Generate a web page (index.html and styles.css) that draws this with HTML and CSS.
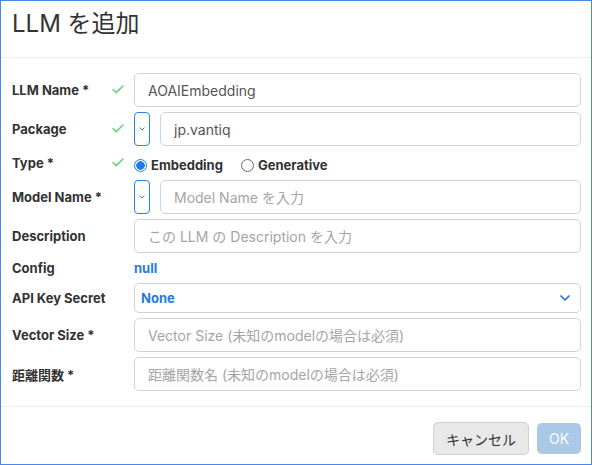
FILE: index.html
```html
<!DOCTYPE html>
<html lang="ja">
<head>
<meta charset="utf-8">
<title>LLM を追加</title>
<link rel="stylesheet" href="styles.css">
</head>
<body>
<div class="dialog">
  <header class="dlg-head">
    <h1 class="dlg-title">LLM を追加</h1>
  </header>
  <form class="dlg-body">
    <label class="lbl r-input">LLM Name *</label>
    <span class="chk r-input"><svg width="12" height="9" viewBox="0 0 12 9"><path d="M1 4.5 L4.3 7.6 L11 1" fill="none" stroke="#6bcf78" stroke-width="1.5" stroke-linecap="round" stroke-linejoin="round"/></svg></span>
    <div class="field r-input"><input class="inp" type="text" value="AOAIEmbedding"></div>

    <label class="lbl r-input">Package</label>
    <span class="chk r-input"><svg width="12" height="9" viewBox="0 0 12 9"><path d="M1 4.5 L4.3 7.6 L11 1" fill="none" stroke="#6bcf78" stroke-width="1.5" stroke-linecap="round" stroke-linejoin="round"/></svg></span>
    <div class="field r-input combo">
      <button type="button" class="ddbtn"><svg width="6" height="4" viewBox="0 0 6 4"><path d="M0.8 0.8 L3 3 L5.2 0.8" fill="none" stroke="#2d7fe3" stroke-width="1" stroke-linecap="round"/></svg></button>
      <input class="inp" type="text" value="jp.vantiq">
    </div>

    <label class="lbl r-type">Type *</label>
    <span class="chk r-type"><svg width="12" height="9" viewBox="0 0 12 9"><path d="M1 4.5 L4.3 7.6 L11 1" fill="none" stroke="#6bcf78" stroke-width="1.5" stroke-linecap="round" stroke-linejoin="round"/></svg></span>
    <div class="field r-type radios">
      <span class="radio"><span class="rdot on"></span>Embedding</span>
      <span class="radio"><span class="rdot"></span>Generative</span>
    </div>

    <label class="lbl r-input">Model Name *</label>
    <span class="chk r-input"></span>
    <div class="field r-input combo">
      <button type="button" class="ddbtn"><svg width="6" height="4" viewBox="0 0 6 4"><path d="M0.8 0.8 L3 3 L5.2 0.8" fill="none" stroke="#2d7fe3" stroke-width="1" stroke-linecap="round"/></svg></button>
      <input class="inp" type="text" placeholder="Model Name を入力">
    </div>

    <label class="lbl r-input">Description</label>
    <span class="chk r-input"></span>
    <div class="field r-input"><input class="inp" type="text" placeholder="この LLM の Description を入力"></div>

    <label class="lbl r-config">Config</label>
    <span class="chk r-config"></span>
    <div class="field r-config"><span class="nullval">null</span></div>

    <label class="lbl r-select">API Key Secret</label>
    <span class="chk r-select"></span>
    <div class="field r-select">
      <div class="sel"><span>None</span><svg width="10" height="6" viewBox="0 0 10 6"><path d="M1 1 L5 5 L9 1" fill="none" stroke="#2f6fd6" stroke-width="1.7" stroke-linecap="round" stroke-linejoin="round"/></svg></div>
    </div>

    <label class="lbl r-input">Vector Size *</label>
    <span class="chk r-input"></span>
    <div class="field r-input"><input class="inp" type="text" placeholder="Vector Size (未知のmodelの場合は必須)"></div>

    <label class="lbl r-input">距離関数 *</label>
    <span class="chk r-input"></span>
    <div class="field r-input"><input class="inp" type="text" placeholder="距離関数名 (未知のmodelの場合は必須)"></div>
  </form>
  <footer class="dlg-foot">
    <button type="button" class="btn btn-cancel">キャンセル</button>
    <button type="button" class="btn btn-ok">OK</button>
  </footer>
</div>
</body>
</html>
```

FILE: styles.css
```css
* { box-sizing: border-box; }
html, body {
  margin: 0;
  padding: 0;
  background: #ffffff;
}
body {
  font-family: Inter, "Noto Sans CJK JP", sans-serif;
  color: #333333;
}
.dialog {
  width: 592px;
  height: 465px;
  border: 1px solid #4a87ec;
  display: flex;
  flex-direction: column;
  background: #fff;
}
.dlg-head {
  height: 57px;
  border-bottom: 1px solid #ececec;
  padding: 9px 11px 0;
}
.dlg-title {
  margin: 0;
  font-size: 24px;
  line-height: 28px;
  font-weight: 400;
  color: #333;
}
.dlg-body {
  margin: 0;
  padding: 15px 10px 15px 11px;
  display: grid;
  grid-template-columns: 100px 22px 1fr;
  grid-template-rows: 34px 34px 24px 34px 34px 20px 30px 34px 34px;
  row-gap: 5px;
}
.lbl {
  display: flex;
  align-items: center;
  font-size: 13px;
  font-weight: 700;
  color: #333;
  white-space: nowrap;
}
.chk {
  display: flex;
  align-items: center;
  padding-bottom: 2px;
}
.field {
  display: flex;
  align-items: center;
  min-width: 0;
}
.combo { gap: 10px; }
.inp {
  flex: 1;
  width: 100%;
  min-width: 0;
  height: 34px;
  border: 1px solid #d3d3d6;
  border-radius: 5px;
  padding: 0 13px;
  font-family: Inter, "Noto Sans CJK JP", sans-serif;
  font-size: 14px;
  color: #555;
  background: #fff;
  outline: none;
}
.inp::placeholder { color: #a5a5a5; }
.ddbtn {
  flex: none;
  width: 16px;
  height: 34px;
  padding: 0;
  border: 1px solid #2d7fe3;
  border-radius: 4px;
  background: #fff;
  display: flex;
  align-items: center;
  justify-content: center;
}
.radios { gap: 18px; padding-top: 4px; }
.radio {
  display: inline-flex;
  align-items: center;
  gap: 4px;
  font-size: 13px;
  font-weight: 700;
  color: #333;
}
.rdot {
  width: 13px;
  height: 13px;
  border-radius: 50%;
  border: 1px solid #6a6a6a;
  background: #fff;
}
.rdot.on {
  border-color: #1f7ae8;
  background: radial-gradient(circle, #1f7ae8 0 4px, #fff 4.5px);
}
.nullval {
  font-size: 13px;
  font-weight: 700;
  color: #1f7ae8;
}
.sel {
  flex: 1;
  height: 30px;
  border: 1px solid #d3d3d6;
  border-radius: 5px;
  padding: 0 10px 0 6px;
  display: flex;
  align-items: center;
  justify-content: space-between;
  font-size: 13px;
  font-weight: 700;
  color: #1f7ae8;
}
.dlg-foot {
  border-top: 1px solid #ececec;
  flex: 1;
  display: flex;
  justify-content: flex-end;
  align-items: flex-start;
  gap: 8px;
  padding: 15px 10px 0 0;
}
.btn {
  font-family: Inter, "Noto Sans CJK JP", sans-serif;
  font-size: 14px;
  height: 33px;
  border-radius: 5px;
  padding: 0;
}
.btn-cancel {
  width: 96px;
  background: #e8e8e8;
  border: 1px solid #cfcfcf;
  color: #333;
}
.btn-ok {
  width: 44px;
  margin-top: 1px;
  height: 31px;
  background: #a9c9e6;
  border: none;
  color: #fff;
}
```
